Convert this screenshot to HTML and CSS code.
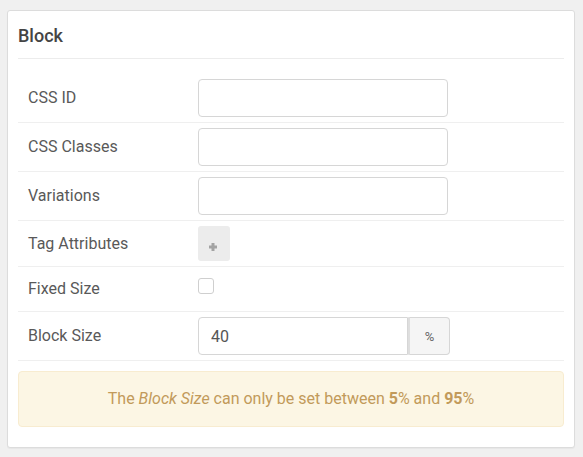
FILE: index.html
```html
<!DOCTYPE html>
<html>
<head>
<meta charset="utf-8">
<link rel="stylesheet" href="styles.css">
</head>
<body>
<div class="panel">
  <div class="panel-title">Block</div>
  <div class="rows">
    <div class="row">
      <div class="label">CSS ID</div>
      <div class="control"><input class="text" type="text"></div>
    </div>
    <div class="row">
      <div class="label">CSS Classes</div>
      <div class="control"><input class="text" type="text"></div>
    </div>
    <div class="row">
      <div class="label">Variations</div>
      <div class="control"><input class="text" type="text"></div>
    </div>
    <div class="row">
      <div class="label">Tag Attributes</div>
      <div class="control">
        <button class="add-btn" type="button">
          <svg class="plus" width="10" height="10" viewBox="0 0 10 10"><path d="M5 1v8M1 5h8" stroke="#a3a3a3" stroke-width="3" fill="none"/></svg>
        </button>
      </div>
    </div>
    <div class="row">
      <div class="label">Fixed Size</div>
      <div class="control check-cell"><input class="check" type="checkbox"></div>
    </div>
    <div class="row">
      <div class="label">Block Size</div>
      <div class="control">
        <div class="input-group">
          <input class="text group-input" type="text" value="40">
          <span class="addon">%</span>
        </div>
      </div>
    </div>
  </div>
  <div class="alert">The <em>Block Size</em> can only be set between <strong>5</strong>% and <strong>95</strong>%</div>
</div>
</body>
</html>
```
FILE: styles.css
```css
html, body {
  margin: 0;
  background: #f0f0f0;
}
body {
  padding: 10px 8px 9px 7px;
  font-family: Roboto, "Liberation Sans", sans-serif;
  color: #555;
}
.panel {
  background: #fff;
  border: 1px solid #dcdcdc;
  border-radius: 3px;
  padding: 0 10px 20px;
  box-shadow: 0 1px 1px rgba(0,0,0,0.04);
}
.panel-title {
  font-size: 18px;
  line-height: 20px;
  font-weight: 500;
  color: #444;
  padding: 15px 0 12px;
  border-bottom: 1px solid #ececec;
}
.rows {
  margin-top: 15px;
}
.row {
  display: grid;
  grid-template-columns: 180px 1fr;
  align-items: center;
  padding: 5px 0;
  border-bottom: 1px solid #efefef;
}
.label {
  padding: 8px 10px;
  line-height: 18px;
  font-size: 16px;
  color: #595959;
}
.control {
  display: flex;
  align-items: center;
}
.text {
  box-sizing: border-box;
  width: 250px;
  height: 38px;
  border: 1px solid #d6d6d6;
  border-radius: 4px;
  padding: 0 12px;
  font-family: Roboto, "Liberation Sans", sans-serif;
  font-size: 16px;
  color: #555;
  background: #fff;
  margin: 0;
  outline: none;
}
.add-btn {
  box-sizing: border-box;
  width: 32px;
  height: 35px;
  border: none;
  border-radius: 3px;
  background: #ececec;
  padding: 0;
  margin: 0;
  display: flex;
  align-items: center;
  justify-content: center;
}
.plus {
  display: block;
  margin: 6px 3px 0 0;
}
.check-cell {
  align-self: start;
}
.check {
  appearance: none;
  -webkit-appearance: none;
  box-sizing: border-box;
  width: 16px;
  height: 16px;
  margin: 6px 0 0;
  border: 1px solid #cfcfcf;
  border-radius: 3px;
  background: #fff;
}
.input-group {
  display: flex;
  height: 38px;
}
.group-input {
  width: 210px;
  border-radius: 4px 0 0 4px;
}
.addon {
  box-sizing: border-box;
  width: 42px;
  height: 38px;
  display: flex;
  align-items: center;
  justify-content: center;
  border: 1px solid #d6d6d6;
  border-left: 2px solid #dedede;
  border-radius: 0 4px 4px 0;
  background: #f5f5f5;
  font-size: 13px;
  color: #666;
}
.alert {
  margin-top: 10px;
  padding: 17px 10px;
  line-height: 20px;
  font-size: 16px;
  text-align: center;
  color: #c29a5a;
  background: #fcf6e4;
  border: 1px solid #f8ecd0;
  border-radius: 4px;
}
.alert em {
  font-style: italic;
}
.alert strong {
  font-weight: 700;
}
```
